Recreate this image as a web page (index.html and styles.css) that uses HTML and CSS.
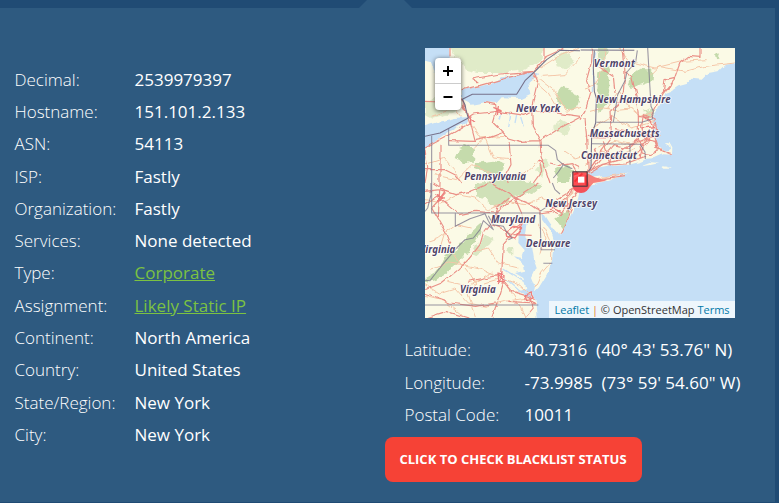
FILE: index.html
```html
<!DOCTYPE html>
<html lang="en">
<head>
<meta charset="utf-8">
<title>IP Details</title>
<link rel="stylesheet" href="styles.css">
</head>
<body>
<div class="topbar"><span class="notch"></span></div>
<main class="panel">
  <dl class="facts">
    <dt>Decimal:</dt><dd>2539979397</dd>
    <dt>Hostname:</dt><dd>151.101.2.133</dd>
    <dt>ASN:</dt><dd>54113</dd>
    <dt>ISP:</dt><dd>Fastly</dd>
    <dt>Organization:</dt><dd>Fastly</dd>
    <dt>Services:</dt><dd>None detected</dd>
    <dt>Type:</dt><dd><a href="#">Corporate</a></dd>
    <dt>Assignment:</dt><dd><a href="#">Likely Static IP</a></dd>
    <dt>Continent:</dt><dd>North America</dd>
    <dt>Country:</dt><dd>United States</dd>
    <dt>State/Region:</dt><dd>New York</dd>
    <dt>City:</dt><dd>New York</dd>
  </dl>
  <section class="location">
    <div class="map">
      <svg class="tiles" viewBox="0 0 930 810">
        <defs>
          <filter id="rough" x="0" y="0" width="100%" height="100%">
            <feTurbulence type="fractalNoise" baseFrequency=".04" numOctaves="3" seed="4"/>
            <feDisplacementMap in="SourceGraphic" scale="22" xChannelSelector="R" yChannelSelector="G"/>
          </filter>
          <filter id="wobble" x="0" y="0" width="100%" height="100%">
            <feTurbulence type="fractalNoise" baseFrequency=".035" numOctaves="2" seed="9"/>
            <feDisplacementMap in="SourceGraphic" scale="14" xChannelSelector="R" yChannelSelector="G"/>
          </filter>
        </defs>
        <rect width="930" height="810" fill="#fbfae6"/>
        <!-- forest -->
        <g fill="#c5dbac" filter="url(#rough)">
          <path fill="none" d="M0 0H930V810H0Z"/>
          <path opacity=".5" d="M65 -20H355L350 35 300 65 230 75 160 75 120 65 100 30Z"/>
          <path opacity=".45" d="M30 150L75 155 95 185 60 205 20 215 0 205V165Z"/>
          <path d="M105 300L130 290 147 305 143 345 115 342 92 330Z"/>
          <path d="M150 345L205 338 243 350 235 372 190 378 148 362Z"/>
          <path opacity=".8" d="M150 405L240 395 350 405 340 425 310 440 265 450 215 480 180 450 150 445Z"/>
          <path d="M390 135L415 118 445 125 463 150 455 178 425 187 400 170Z"/>
          <path opacity=".5" d="M390 30L425 10 445 45 420 60 395 55ZM380 240L410 215 440 230 420 265ZM330 370L360 330 372 350 350 390Z"/>
          <path d="M390 365L425 348 440 370 435 405H395ZM390 510L430 480 438 505 415 545 400 525Z"/>
          <path d="M520 70L550 55 556 110 545 175 520 195 517 130Z"/>
          <path d="M605 95L640 65 682 68 680 100 650 110 620 120ZM870 20L880 12 885 30 874 37Z"/>
          <path opacity=".8" d="M515 -20H550L540 40 520 35ZM655 190L685 180 680 210 660 215Z"/>
          <path d="M170 525L165 560 120 625 70 670 40 690 0 705V690L35 670 65 625 100 600 135 555Z"/>
          <path opacity=".6" d="M205 570L190 590 155 620 135 625 150 590 180 565ZM245 600L265 590 265 620 250 610Z"/>
        </g>
        <!-- water -->
        <g filter="url(#wobble)">
          <path fill="#c5dff6" d="M960 42L900 50 880 70 850 75 830 95 800 92 785 108 760 115 740 128 722 135 710 160 695 190 685 205 682 225 695 235 682 250 692 262 693 280 703 298 720 308 738 303 735 290 722 283 733 282 742 298 741 320 715 319 690 330 665 332 648 341 610 350 560 354 510 364 485 378 490 391 530 385 575 384 612 373 580 388 540 400 492 410 465 420 458 455 438 500 405 563 392 550 375 525 352 490 354 515 378 548 390 588 384 635 365 680 342 718 325 735 335 765 340 840H960Z"/>
          <path fill="#c5dff6" d="M110 126L150 118 195 108 228 88 270 82 325 70 340 78 310 105 316 138 290 150 230 148 215 165 180 163 140 170 112 155Z"/>
          <path fill="#c5dff6" d="M-20 240L38 222 90 210 130 207 122 225 75 250 40 275 0 302 -20 310Z"/>
          <path fill="#c5dff6" d="M-20 -20H68L75 28 52 45 30 75 18 42 -20 32Z"/>
          <path fill="#c5dff6" d="M282 543L305 525 298 568 318 595 325 640 332 660 318 690 330 720 322 750 300 738 272 730 304 720 295 690 270 675 300 668 297 650 267 625 291 630 299 606 280 585Z"/>
          <path d="M648 355L680 343 703 345 680 350ZM710 355L730 356 740 362 718 362Z" fill="#fbfae6"/>
          <path fill="none" stroke="#c5dff6" stroke-width="4" d="M230 195L226 215M255 190L248 240M275 200L270 225M290 210L298 235M236 663L278 690 308 704M240 690L280 725 318 746M508 65L505 130M512 10L506 40"/>
        </g>
        <g filter="url(#wobble)">
          <path fill="none" d="M0 0H930V810H0Z"/>
          <g class="minor">
            <path d="M20 205L90 180 110 205M345 60L400 25 465 0M325 80L390 130 425 190 465 175M320 90L370 135 400 185M465 30L420 80 350 85M135 225L165 270 240 265M145 300L180 270 205 330 255 335M0 350L60 330 90 365 105 405M30 380L95 395 140 350 230 388 300 375 345 335M420 310L450 330 465 325"/>
            <path d="M0 455L50 465 95 440 150 450 190 485 250 460 300 470 350 450 400 475 450 430M10 580L40 570 95 530 140 540M0 710L40 735 90 720 130 765 180 775 240 760 310 750M60 550L45 600 80 610 105 650 170 665 220 690M0 745L60 760 110 800M150 610L190 600 220 645 280 660M180 705L230 690 285 712 320 745M120 660L155 705 130 740 155 810M250 720L280 765 300 810M70 700L130 715 200 675M15 665L70 645 115 650 160 600"/>
            <path d="M480 120L505 112 535 65 540 0M585 0L610 40 690 60 770 40 845 35M545 180L580 130 610 175 645 205 690 190M675 80L700 55 780 70 840 55 930 45M495 190L535 180 570 185 620 180M500 240L560 205 620 240 690 220M520 300L570 280 625 290 705 260M480 350L530 310 570 330 630 300M570 390L530 388 600 377M356 540L380 590 380 640 350 675 330 720M340 530L360 570 345 620"/>
          </g>
          <g class="major">
            <path d="M0 160L45 162 110 153 130 205 112 170M110 125L165 112 250 88 325 70 365 25 420 0M160 105L140 93 225 78 325 70M130 207L145 198 220 190 300 202 325 188 360 190 465 205M180 163L212 170 215 190 205 225 250 270 285 280 345 278 405 240 465 208M325 70L338 100 320 175 322 235 345 278 348 325 375 405M75 0V25M360 0V30"/>
            <path d="M130 210L135 225 75 260 0 300M135 220L150 278 195 268 230 255M75 278L150 280M0 305L8 360 0 405M45 290V405M0 365H60L90 380 110 405M252 280L258 350 240 385 250 405M375 345L405 352 440 347 465 360M345 345L350 370 325 405"/>
            <path d="M25 405L65 430 20 480 60 550 75 590M0 430L45 425 90 440 135 430 195 405 270 450 300 520 260 560 235 590 230 680 235 705 225 740 200 810M0 470L40 445 105 500 150 490 210 495 270 450 340 405M45 405L40 510M250 450L215 480 205 515 175 555 165 590 130 635 100 665 50 705 0 725M345 495L380 490 405 500 435 465 465 420M270 450L320 470 348 490M265 560L320 562M260 560L240 545 200 530M0 738L75 765 155 775 210 765M235 700L260 730 310 745 330 765 250 760M315 745L325 780 300 810M0 810L65 790 130 810M230 680L180 690 130 700M440 475L430 510 405 560"/>
            <path d="M502 0L500 40 485 95 498 130 480 190 465 215M480 210L485 270 490 375M482 265L540 267 620 265 680 255M595 0L600 75 595 130 580 170 555 190 560 270 530 310 490 370M520 55L565 85 570 135M600 70L620 85 635 150 640 205 675 210 700 165 715 135 745 100 765 45 790 25 825 28V0M720 95L750 88 738 115 715 130ZM640 205L640 245 665 270 700 265M655 200L690 215 695 245 680 265 655 260 650 235Z"/>
            <path d="M475 378L530 350 590 335 640 315 665 285 680 265M555 355L560 330 600 295 680 265M490 378L535 352 600 348 660 325M500 365L565 290 610 300 645 270M645 300L665 275 690 280 700 310 675 320 650 315ZM690 270L700 300 740 320M690 300L735 317M535 280L560 355M480 378L520 330 510 300M690 225L680 240M465 402L530 393 600 383M645 330L655 295 635 255 570 242M440 350L465 390 440 435M445 430L380 485M395 455L460 415M425 440L430 490"/>
          </g>
          <g class="city"><path d="M205 178L228 188 212 192 232 198M220 172L217 205M125 200L150 220M137 205V230M216 675L240 680 238 700 218 700ZM222 685L245 697M235 670L220 708M245 550L265 535 290 540 270 570 248 565ZM265 540L285 530 298 525 275 560M300 740L320 735 328 750 305 755ZM375 485L410 470M380 480L405 490M28 440L55 450 38 460 60 430M340 335L360 350M650 240L690 235M655 205L690 240"/></g>
        </g>
        <!-- borders -->
        <g class="border">
          <path d="M0 265L45 255 130 210 124 190 120 170 112 154 142 139H275L300 98 328 72 365 35 405 7 465 8M467 6L628 7M508 7L505 60 508 130 514 150 512 225 500 260 498 360 490 370"/>
          <path opacity=".75" d="M20 263V495H345L348 605H390M71 241V292H370L392 308 397 335 415 350 442 362M415 350L400 372 385 390M514 223H650L682 213 685 190 678 175 668 0M637 7L632 42 606 72 600 98 578 140 572 180 565 222M500 287L648 289M615 290V350M645 288L660 312 661 333M91 495V535L135 512 180 497 190 518 205 545 175 518 165 545 145 570 120 575 95 600 65 635 35 672 15 698 0 697M190 503L205 530 235 535 245 552 262 570 250 575M355 646H382M0 771H340M345 490L375 470M382 405L390 425 405 438M18 405V440L8 480 0 490"/>
        </g>
        <!-- highlighted location -->
        <path d="M446 388L484 374 510 388 545 398 505 405 488 425 478 432 455 432 444 424Z" fill="#f77e78"/>
        <ellipse cx="468" cy="412" rx="25" ry="23" fill="#f4525a"/>
        <path d="M443 371H486V414H443Z" fill="#ff4a50" opacity=".85"/>
        <path d="M446 380L460 375M449 401L472 376M484 382V412" fill="none" stroke="#f21822" stroke-width="6" opacity=".6"/>
        <rect x="443.5" y="371.5" width="43" height="43" fill="none" stroke="#35343a" stroke-width="3"/>
        <rect x="459" y="386" width="19" height="18" fill="#fff"/>
        <g class="labels">
          <text x="506" y="56" textLength="124">Vermont</text>
          <text x="273" y="193" textLength="133">New York</text>
          <text x="513" y="164" textLength="224">New Hampshire</text>
          <text x="494" y="266" textLength="210">Massachusetts</text>
          <text x="468" y="333" textLength="168">Connecticut</text>
          <text x="118" y="395" textLength="185">Pennsylvania</text>
          <text x="361" y="477" textLength="155">New Jersey</text>
          <text x="198" y="525" textLength="133">Maryland</text>
          <text x="303" y="597" textLength="133">Delaware</text>
          <text x="-16" y="616" textLength="107">Virginia</text>
          <text x="105" y="734" textLength="107">Virginia</text>
        </g>
      </svg>
      <div class="zoom">
        <button aria-label="Zoom in"><svg viewBox="0 0 12 12"><path d="M1 6H11M6 1V11"/></svg></button>
        <button aria-label="Zoom out"><svg viewBox="0 0 12 12"><path d="M1.5 6H10.5"/></svg></button>
      </div>
      <div class="credit"><a href="#">Leaflet</a> <i>|</i> © OpenStreetMap <a href="#">Terms</a></div>
    </div>
    <dl class="coords">
      <dt>Latitude:</dt><dd>40.7316&nbsp; (40° 43' 53.76" N)</dd>
      <dt>Longitude:</dt><dd>-73.9985&nbsp; (73° 59' 54.60" W)</dd>
      <dt>Postal Code:</dt><dd>10011</dd>
    </dl>
    <a class="cta" href="#">CLICK TO CHECK BLACKLIST STATUS</a>
  </section>
</main>
</body>
</html>
```
FILE: styles.css
```css
* { box-sizing: border-box; }
body {
  margin: 0;
  height: 503px;
  overflow: hidden;
  background: #204b74;
  color: #fff;
  font-family: "Open Sans", sans-serif;
  font-size: 17px;
}
.topbar { height: 8px; padding-left: 359px; }
.notch {
  display: block;
  width: 53px;
  height: 8px;
  background: #2e5a80;
  clip-path: polygon(8px 0, 45px 0, 100% 100%, 0 100%);
}
.panel {
  display: flex;
  width: 775px;
  height: 494px;
  padding: 40px 0 0 14.5px;
  background: #2e5a80;
}
dl {
  display: grid;
  grid-template-columns: 120px auto;
  grid-auto-rows: 32.3px;
  margin: 0;
  line-height: 32.3px;
  white-space: nowrap;
}
dt { font-weight: 300; }
dd { margin: 0; }
.facts { width: 370.5px; padding-top: 15.7px; align-content: start; }
.facts dd { font-weight: 500; }
.facts a { color: #7cc242; font-weight: 400; }
.location {
  display: flex;
  flex-direction: column;
  align-items: flex-start;
}
.map {
  position: relative;
  width: 310px;
  height: 270px;
  margin-left: 40px;
  overflow: hidden;
}
.tiles { display: block; width: 310px; height: 270px; }
.minor, .major, .city, .border { fill: none; stroke-linejoin: round; }
.minor { stroke: #f5c6a8; stroke-width: 3; }
.major { stroke: #ea9087; stroke-width: 3.5; }
.city { stroke: #ee7f7d; stroke-width: 4; }
.border { stroke: #77718a; stroke-width: 3.2; }
.labels {
  fill: #504468;
  stroke: #ffffffd0;
  stroke-width: 5px;
  stroke-linejoin: round;
  paint-order: stroke;
  font: italic 700 29px "Noto Sans", sans-serif;
}
.zoom {
  position: absolute;
  top: 10px;
  left: 10px;
  width: 26px;
  border-radius: 4px;
  background: #fff;
  box-shadow: 0 1px 5px rgba(0, 0, 0, .65);
}
.zoom button {
  display: flex;
  align-items: center;
  justify-content: center;
  width: 26px;
  height: 26px;
  padding: 0;
  border: 0;
  background: none;
}
.zoom button:first-child { border-bottom: 1px solid #ccc; }
.zoom svg { width: 12px; height: 12px; fill: none; stroke: #000; stroke-width: 2; }
.credit {
  position: absolute;
  right: 0;
  bottom: 0;
  width: 186px;
  height: 17px;
  padding-left: 5.5px;
  background: rgba(255, 255, 255, .7);
  color: #333;
  font-size: 11px;
  line-height: 17px;
  white-space: nowrap;
}
.credit a { color: #0078a8; text-decoration: none; }
.credit i { color: #e8792b; font-style: normal; }
.coords { margin: 16.3px 0 0 19.5px; }
.cta {
  width: 257px;
  height: 45px;
  margin-top: 5.7px;
  padding-right: 1px;
  border-radius: 8px;
  background: #f64236;
  color: #fff;
  font-size: 13px;
  font-weight: 700;
  line-height: 45px;
  text-align: center;
  text-decoration: none;
  white-space: nowrap;
}
```
